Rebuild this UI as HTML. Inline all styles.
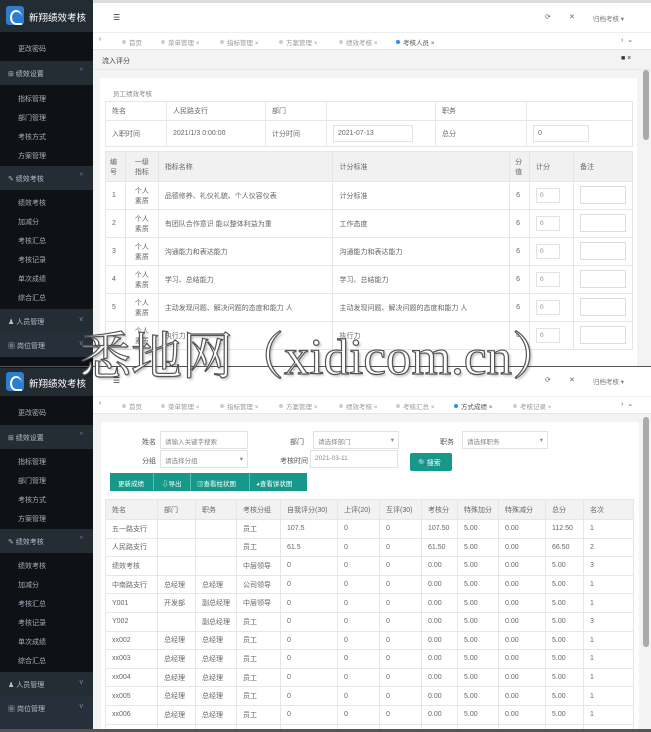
<!DOCTYPE html>
<html><head><meta charset="utf-8"><style>
*{margin:0;padding:0;box-sizing:border-box}
body{width:651px;height:732px;overflow:hidden;position:relative;background:#f3f3f4;font-family:"Liberation Sans","Noto Sans CJK SC",sans-serif;font-size:7px;color:#666}
.a{position:absolute}
.sb{position:absolute;left:0;width:93px;background:#0e1217;overflow:hidden}
.logo{position:absolute;left:0;top:0;width:93px;height:32px;background:#232b33;color:#fff;font-size:9.5px}
.logo i{position:absolute;left:6px;top:6px;width:18px;height:19px;background:#2e7ed0;border-radius:3px}
.logo i:after{content:"";position:absolute;left:4px;top:4px;width:10px;height:11px;border:2px solid #fff;border-radius:50% 50% 0 50%;border-right:none}
.logo span{position:absolute;left:29px;top:10px;white-space:nowrap}
.it{position:absolute;left:18px;color:#aab;font-size:7px;white-space:nowrap}
.gh{position:absolute;left:0;width:93px;height:24px;background:#242c34;color:#bbc;font-size:7px;padding:8px 0 0 8px}
.gh b{position:absolute;right:10px;top:7px;font-weight:normal;color:#889}
.top{position:absolute;left:93px;width:558px;height:32px;background:#fff}
.tabs{position:absolute;left:93px;width:558px;height:18px;background:#fff;border-top:1px solid #eee;border-bottom:1px solid #e6e6e6}
.tab{position:absolute;top:4px;font-size:6.5px;color:#999;white-space:nowrap}
.tab:before{content:"";display:inline-block;width:4px;height:4px;border-radius:50%;background:#ccc;margin-right:3px;vertical-align:1px}
.tab.on{color:#555}.tab.on:before{background:#2d8cf0}
table{border-collapse:collapse;position:absolute}
td{border:1px solid #e6e6e6;padding:0 6px;font-size:7px;color:#666;white-space:nowrap}
.inp{position:absolute;background:#fff;border:1px solid #e2e2e2;font-size:6.5px;color:#888;padding:4px 4px}
.wm{position:absolute;left:80px;top:328px;font-family:"Liberation Serif","Noto Serif CJK SC",serif;font-size:51px;line-height:60px;color:#fff;-webkit-text-stroke:1.2px #555;white-space:nowrap;text-shadow:2px 2px 2px rgba(0,0,0,.25)}
</style></head><body>

<div class="a" style="left:0;top:0;width:651px;height:3px;background:#ddd"></div>
<div class="sb" style="top:0;height:366px">
<div class="it" style="top:44px">更改密码</div>
<div class="gh" style="top:61px">⊞ 绩效设置<b>^</b></div>
<div class="it" style="top:94px">指标管理</div>
<div class="it" style="top:113px">部门管理</div>
<div class="it" style="top:132px">考核方式</div>
<div class="it" style="top:151px">方案管理</div>
<div class="gh" style="top:166px">✎ 绩效考核<b>^</b></div>
<div class="it" style="top:198px">绩效考核</div>
<div class="it" style="top:217px">加减分</div>
<div class="it" style="top:236px">考核汇总</div>
<div class="it" style="top:255px">考核记录</div>
<div class="it" style="top:274px">单次成绩</div>
<div class="it" style="top:293px">综合汇总</div>
<div class="gh" style="top:309px">♟ 人员管理<b>v</b></div>
<div class="gh" style="top:333px;background:#27303a">▦ 岗位管理<b>v</b></div>
<div class="logo"><i></i><span>新翔绩效考核</span></div>
</div>
<div class="top" style="top:3px;height:29px">
<div class="a" style="left:20px;top:10px;font-size:8px;color:#333">☰</div>
<div class="a" style="left:452px;top:10px;color:#666">⟳</div>
<div class="a" style="left:476px;top:10px;color:#666">✕</div>
<div class="a" style="left:500px;top:10px;color:#777;font-size:6.5px">归档考核 ▾</div>
</div>
<div class="tabs" style="top:32px">
<div class="a" style="left:6px;top:3px;color:#555">‹</div>
<div class="tab" style="left:29px">首页</div>
<div class="tab" style="left:68px">菜单管理 ×</div>
<div class="tab" style="left:127px">指标管理 ×</div>
<div class="tab" style="left:186px">方案管理 ×</div>
<div class="tab" style="left:246px">绩效考核 ×</div>
<div class="tab on" style="left:303px">考核人员 ×</div>
<div class="a" style="left:528px;top:3px;color:#555">›&nbsp;&nbsp;⌄</div>
</div>
<div class="a" style="left:93px;top:50px;width:558px;height:20px;background:#f3f3f3;border-bottom:1px solid #e8e8e8">
<div class="a" style="left:9px;top:6px;color:#444">流入评分</div>
<div class="a" style="left:528px;top:5px;color:#333">■ ×</div>
</div>
<div class="a" style="left:643px;top:70px;width:6px;height:70px;background:#aaa;border-radius:3px"></div>
<div class="a" style="left:100px;top:78px;width:537px;height:290px;background:#fff"></div>
<div class="a" style="left:113px;top:88px;color:#888;font-size:6.5px">员工绩效考核</div>
<table style="left:105px;top:101px;width:528px">
<tr style="height:19px"><td style="width:61px">姓名</td><td style="width:99px">人民路支行</td><td style="width:61px">部门</td><td style="width:109px"></td><td style="width:91px">职务</td><td></td></tr>
<tr style="height:26px"><td>入职时间</td><td>2021/1/3 0:00:00</td><td>计分时间</td><td><span style="border:1px solid #e2e2e2;padding:4px 4px;display:inline-block;width:80px">2021-07-13</span></td><td>总分</td><td><span style="border:1px solid #e2e2e2;padding:4px 4px;display:inline-block;width:56px">0</span></td></tr>
</table>
<table style="left:105px;top:151px;width:528px">
<tr style="height:30px;background:#f1f1f1"><td style="width:20px;white-space:normal;padding:0 4px">编号</td><td style="width:33px;white-space:normal;padding:0 6px;text-align:center">一级指标</td><td style="width:175px">指标名称</td><td style="width:177px">计分标准</td><td style="width:20px;white-space:normal;padding:0 5px">分值</td><td style="width:44px">计分</td><td>备注</td></tr>
<tr style="height:28px"><td>1</td><td style="white-space:normal;text-align:center">个人素质</td><td>品德修养、礼仪礼貌、个人仪容仪表</td><td>计分标准</td><td>6</td><td><span class="inp" style="position:static;display:inline-block;width:24px;padding:3px">0</span></td><td><span style="display:inline-block;width:46px;height:18px;border:1px solid #ddd"></span></td></tr>
<tr style="height:28px"><td>2</td><td style="white-space:normal;text-align:center">个人素质</td><td>有团队合作意识 能以整体利益为重</td><td>工作态度</td><td>6</td><td><span class="inp" style="position:static;display:inline-block;width:24px;padding:3px">0</span></td><td><span style="display:inline-block;width:46px;height:18px;border:1px solid #ddd"></span></td></tr>
<tr style="height:28px"><td>3</td><td style="white-space:normal;text-align:center">个人素质</td><td>沟通能力和表达能力</td><td>沟通能力和表达能力</td><td>6</td><td><span class="inp" style="position:static;display:inline-block;width:24px;padding:3px">0</span></td><td><span style="display:inline-block;width:46px;height:18px;border:1px solid #ddd"></span></td></tr>
<tr style="height:28px"><td>4</td><td style="white-space:normal;text-align:center">个人素质</td><td>学习、总结能力</td><td>学习、总结能力</td><td>6</td><td><span class="inp" style="position:static;display:inline-block;width:24px;padding:3px">0</span></td><td><span style="display:inline-block;width:46px;height:18px;border:1px solid #ddd"></span></td></tr>
<tr style="height:28px"><td>5</td><td style="white-space:normal;text-align:center">个人素质</td><td>主动发现问题、解决问题的态度和能力 人</td><td>主动发现问题、解决问题的态度和能力 人</td><td>6</td><td><span class="inp" style="position:static;display:inline-block;width:24px;padding:3px">0</span></td><td><span style="display:inline-block;width:46px;height:18px;border:1px solid #ddd"></span></td></tr>
<tr style="height:28px"><td>6</td><td style="white-space:normal;text-align:center">个人素质</td><td>执行力</td><td>执行力</td><td>6</td><td><span class="inp" style="position:static;display:inline-block;width:24px;padding:3px">0</span></td><td><span style="display:inline-block;width:46px;height:18px;border:1px solid #ddd"></span></td></tr>
</table>

<div class="a" style="left:0;top:366px;width:651px;height:366px;background:#f3f3f4;border-top:1px solid #555;overflow:hidden">
<div class="sb" style="top:0;height:366px">
<div class="it" style="top:41px">更改密码</div>
<div class="gh" style="top:58px">⊞ 绩效设置<b>^</b></div>
<div class="it" style="top:90px">指标管理</div>
<div class="it" style="top:109px">部门管理</div>
<div class="it" style="top:128px">考核方式</div>
<div class="it" style="top:147px">方案管理</div>
<div class="gh" style="top:162px">✎ 绩效考核<b>^</b></div>
<div class="it" style="top:194px">绩效考核</div>
<div class="it" style="top:213px">加减分</div>
<div class="it" style="top:232px">考核汇总</div>
<div class="it" style="top:251px">考核记录</div>
<div class="it" style="top:270px">单次成绩</div>
<div class="it" style="top:289px">综合汇总</div>
<div class="gh" style="top:305px">♟ 人员管理<b>v</b></div>
<div class="gh" style="top:329px;background:#27303a">▦ 岗位管理<b>v</b></div>
<div class="gh" style="top:353px;background:#27303a"></div>
<div class="logo" style="top:1px;height:28px"><i style="top:4px"></i><span style="top:8px">新翔绩效考核</span></div>
</div>
<div class="top" style="top:0;height:29px">
<div class="a" style="left:20px;top:9px;font-size:8px;color:#333">☰</div>
<div class="a" style="left:452px;top:9px;color:#666">⟳</div>
<div class="a" style="left:476px;top:9px;color:#666">✕</div>
<div class="a" style="left:500px;top:9px;color:#777;font-size:6.5px">归档考核 ▾</div>
</div>
<div class="tabs" style="top:29px">
<div class="a" style="left:6px;top:3px;color:#555">‹</div>
<div class="tab" style="left:29px">首页</div>
<div class="tab" style="left:68px">菜单管理 ×</div>
<div class="tab" style="left:127px">指标管理 ×</div>
<div class="tab" style="left:186px">方案管理 ×</div>
<div class="tab" style="left:246px">绩效考核 ×</div>
<div class="tab" style="left:303px">考核汇总 ×</div>
<div class="tab on" style="left:361px">方式成绩 ×</div>
<div class="tab" style="left:420px">考核记录 ×</div>
<div class="a" style="left:528px;top:3px;color:#555">›&nbsp;&nbsp;⌄</div>
</div>
<div class="a" style="left:643px;top:50px;width:6px;height:230px;background:#aaa;border-radius:3px"></div>
<div class="a" style="left:101px;top:55px;width:538px;height:320px;background:#fff"></div>
<div class="a" style="left:142px;top:70px;color:#555">姓名</div>
<div class="inp" style="left:160px;top:64px;width:88px;height:18px">请输入关键字搜索</div>
<div class="a" style="left:290px;top:70px;color:#555">部门</div>
<div class="inp" style="left:313px;top:64px;width:86px;height:18px">请选择部门 <span style="float:right">▾</span></div>
<div class="a" style="left:440px;top:70px;color:#555">职务</div>
<div class="inp" style="left:462px;top:64px;width:86px;height:18px">请选择职务 <span style="float:right">▾</span></div>
<div class="a" style="left:142px;top:89px;color:#555">分组</div>
<div class="inp" style="left:160px;top:83px;width:88px;height:18px">请选择分组 <span style="float:right">▾</span></div>
<div class="a" style="left:280px;top:89px;color:#555">考核时间</div>
<div class="inp" style="left:310px;top:83px;width:88px;height:18px">2021-03-11</div>
<div class="a" style="left:410px;top:86px;width:42px;height:18px;background:#16998a;color:#fff;padding:5px 0 0 8px;border-radius:2px">🔍搜索</div>
<div class="a" style="left:110px;top:106px;width:197px;height:18px;background:#16998a;color:#fff;font-size:6.5px">
<span class="a" style="left:8px;top:5px">更新成绩</span><span class="a" style="left:43px;top:0;width:1px;height:18px;background:#5bbbb0"></span>
<span class="a" style="left:52px;top:5px">⇩导出</span><span class="a" style="left:80px;top:0;width:1px;height:18px;background:#5bbbb0"></span>
<span class="a" style="left:87px;top:5px">▥查看柱状图</span><span class="a" style="left:139px;top:0;width:1px;height:18px;background:#5bbbb0"></span>
<span class="a" style="left:146px;top:5px">◕查看饼状图</span></div>
<table style="left:105px;top:132px;width:529px">
<tr style="height:20px;background:#f2f2f2"><td style="width:52px">姓名</td><td style="width:38px">部门</td><td style="width:39px">职务</td><td style="width:44px">考核分组</td><td style="width:57px">自我评分(30)</td><td style="width:42px">上评(20)</td><td style="width:42px">互评(30)</td><td style="width:36px">考核分</td><td style="width:37px">特殊加分</td><td style="width:47px">特殊减分</td><td style="width:38px">总分</td><td>名次</td></tr>
<tr style="height:18.6px"><td>五一路支行</td><td></td><td></td><td>员工</td><td>107.5</td><td>0</td><td>0</td><td>107.50</td><td>5.00</td><td>0.00</td><td>112.50</td><td>1</td></tr>
<tr style="height:18.6px"><td>人民路支行</td><td></td><td></td><td>员工</td><td>61.5</td><td>0</td><td>0</td><td>61.50</td><td>5.00</td><td>0.00</td><td>66.50</td><td>2</td></tr>
<tr style="height:18.6px"><td>绩效考核</td><td></td><td></td><td>中层领导</td><td>0</td><td>0</td><td>0</td><td>0.00</td><td>5.00</td><td>0.00</td><td>5.00</td><td>3</td></tr>
<tr style="height:18.6px"><td>中南路支行</td><td>总经理</td><td>总经理</td><td>公司领导</td><td>0</td><td>0</td><td>0</td><td>0.00</td><td>5.00</td><td>0.00</td><td>5.00</td><td>1</td></tr>
<tr style="height:18.6px"><td>Y001</td><td>开发部</td><td>副总经理</td><td>中层领导</td><td>0</td><td>0</td><td>0</td><td>0.00</td><td>5.00</td><td>0.00</td><td>5.00</td><td>1</td></tr>
<tr style="height:18.6px"><td>Y002</td><td></td><td>副总经理</td><td>员工</td><td>0</td><td>0</td><td>0</td><td>0.00</td><td>5.00</td><td>0.00</td><td>5.00</td><td>3</td></tr>
<tr style="height:18.6px"><td>xx002</td><td>总经理</td><td>总经理</td><td>员工</td><td>0</td><td>0</td><td>0</td><td>0.00</td><td>5.00</td><td>0.00</td><td>5.00</td><td>1</td></tr>
<tr style="height:18.6px"><td>xx003</td><td>总经理</td><td>总经理</td><td>员工</td><td>0</td><td>0</td><td>0</td><td>0.00</td><td>5.00</td><td>0.00</td><td>5.00</td><td>1</td></tr>
<tr style="height:18.6px"><td>xx004</td><td>总经理</td><td>总经理</td><td>员工</td><td>0</td><td>0</td><td>0</td><td>0.00</td><td>5.00</td><td>0.00</td><td>5.00</td><td>1</td></tr>
<tr style="height:18.6px"><td>xx005</td><td>总经理</td><td>总经理</td><td>员工</td><td>0</td><td>0</td><td>0</td><td>0.00</td><td>5.00</td><td>0.00</td><td>5.00</td><td>1</td></tr>
<tr style="height:18.6px"><td>xx006</td><td>总经理</td><td>总经理</td><td>员工</td><td>0</td><td>0</td><td>0</td><td>0.00</td><td>5.00</td><td>0.00</td><td>5.00</td><td>1</td></tr>
<tr style="height:18.6px"><td>xx007</td><td>总经理</td><td>总经理</td><td>员工</td><td>0</td><td>0</td><td>0</td><td>0.00</td><td>5.00</td><td>0.00</td><td>5.00</td><td>1</td></tr>
</table>
</div>
<div class="a" style="left:0;top:729px;width:651px;height:3px;background:#555"></div>

<div class="wm">悉地网（xidicom.cn）</div>
</body></html>
